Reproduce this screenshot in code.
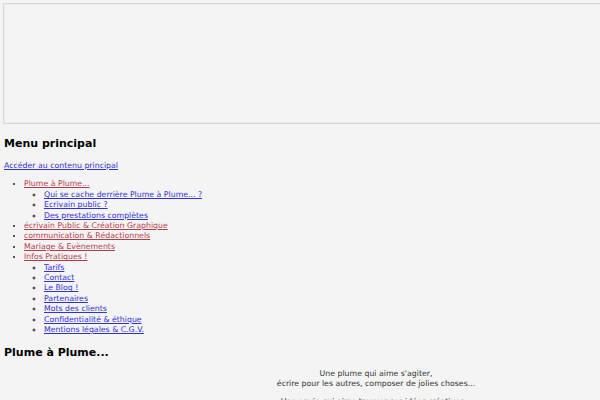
export default function App() {
  const sub1 = ['Qui se cache derrière Plume à Plume... ?', 'Ecrivain public ?', 'Des prestations complètes'];
  const sub2 = ['Tarifs', 'Contact', 'Le Blog !', 'Partenaires', 'Mots des clients', 'Confidentialité & éthique', 'Mentions légales & C.G.V.'];
  const red = 'text-[#b43c4a] underline';
  const blue = 'text-[#3030d8] underline';

  return (
    <div className="w-[600px] h-[400px] overflow-hidden bg-[#f4f4f4] text-[#222] font-['DejaVu_Sans',sans-serif] text-[7.8px] leading-[10.4px]">
      {/* header frame */}
      <div className="mt-[3px] ml-[3px] w-[700px] h-[121px] border border-[#d8d8d8]">
        <div className="h-full border border-[#ececec]" />
      </div>

      <div className="px-[4px]">
        <h2 className="mt-[13px] text-[11px] leading-[13px] font-bold text-black">Menu principal</h2>
        <p className="mt-[11px]">
          <a href="#" className={blue}>Accéder au contenu principal</a>
        </p>

        <ul className="mt-[8px] pl-[20px] list-disc">
          <li>
            <a href="#" className={red}>Plume à Plume...</a>
            <ul className="pl-[20px] list-[circle]">
              {sub1.map(t => (
                <li key={t}><a href="#" className={blue}>{t}</a></li>
              ))}
            </ul>
          </li>
          <li><a href="#" className={red}>écrivain Public & Création Graphique</a></li>
          <li><a href="#" className={red}>communication & Rédactionnels</a></li>
          <li><a href="#" className={red}>Mariage & Evènements</a></li>
          <li>
            <a href="#" className={red}>Infos Pratiques !</a>
            <ul className="pl-[20px] list-[circle]">
              {sub2.map(t => (
                <li key={t}><a href="#" className={blue}>{t}</a></li>
              ))}
            </ul>
          </li>
        </ul>

        <h2 className="mt-[10px] text-[11px] leading-[13px] font-bold text-black">Plume à Plume...</h2>
      </div>

      <div className="mt-[10px] pl-[152px] text-center text-[#333]">
        <p>Une plume qui aime s'agiter,<br />écrire pour les autres, composer de jolies choses...</p>
        <p className="mt-[8px]">Une envie qui aime trouver ses idées créatives...</p>
      </div>
    </div>
  );
}
